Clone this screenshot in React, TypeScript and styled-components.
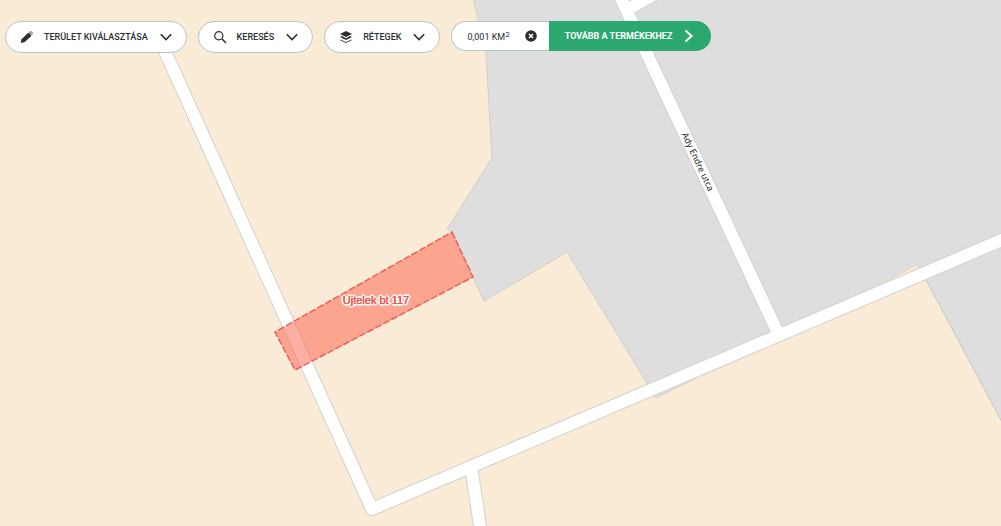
import React from 'react';
import styled, { createGlobalStyle } from 'styled-components';

const GlobalStyle = createGlobalStyle`
  *, *::before, *::after { box-sizing: border-box; }
  body { margin: 0; background: #faebd7; font-family: Roboto, "Liberation Sans", sans-serif; }
`;

const Page = styled.main`
  position: relative;
  min-height: 100vh;
  overflow: hidden;
`;

const MapCanvas = styled.svg`
  position: absolute;
  inset: 0;
  width: 100%;
  height: 100%;
  display: block;
`;

const StreetName = styled.text`
  font: 400 9px "Noto Sans", sans-serif;
  fill: #222;
  stroke: #fff;
  stroke-width: 2px;
  paint-order: stroke;
  text-anchor: middle;
`;

const ParcelName = styled.text`
  font: 400 11px "Liberation Sans", Arial, sans-serif;
  fill: #e85c56;
  text-anchor: middle;
  text-shadow:
    0 0 0 #e85c56, 0 0 0 #e85c56,
    1px 0 1px #fff, -1px 0 1px #fff, 0 1px 1px #fff, 0 -1px 1px #fff,
    2px 0 1px #fff, -2px 0 1px #fff, 0 2px 1px #fff, 0 -2px 1px #fff,
    1px 1px 1px #fff, -1px -1px 1px #fff, 1px -1px 1px #fff, -1px 1px 1px #fff;
`;

const Toolbar = styled.nav`
  position: relative;
  display: flex;
  align-items: flex-start;
  gap: 11px;
  padding: 21px 5px;
`;

const PillButton = styled.button`
  display: flex;
  align-items: center;
  height: 32px;
  padding: 0 14px;
  border: 1px solid #b4c8bf;
  border-radius: 16px;
  background: #fff;
  color: #2b2f31;
  font: 500 9px Roboto, sans-serif;
  white-space: nowrap;
  cursor: pointer;
`;

const PillLabel = styled.span`
  margin: 0 12px 0 10px;
`;

const AreaGroup = styled.div`
  display: flex;
  height: 30px;
`;

const AreaValue = styled.div`
  display: flex;
  align-items: center;
  gap: 15px;
  padding: 0 12px 0 15px;
  border: 1px solid #b4c8bf;
  border-right: 0;
  border-radius: 15px 0 0 15px;
  background: #fff;
  color: #2b2f31;
  font-size: 9px;
  white-space: nowrap;

  sup {
    font-size: 8px;
    line-height: 1;
    vertical-align: 3px;
  }
`;

const ClearButton = styled.button`
  display: flex;
  padding: 0;
  border: 0;
  background: none;
  cursor: pointer;
`;

const NextButton = styled.button`
  display: flex;
  align-items: center;
  gap: 12px;
  padding: 0 17px 0 16px;
  border: 0;
  border-radius: 0 15px 15px 0;
  background: #2ba86f;
  color: #fff;
  font: 700 9px Roboto, sans-serif;
  white-space: nowrap;
  cursor: pointer;
`;

const PencilIcon = () => (
  <svg width="14" height="14" viewBox="0 0 14 14" aria-hidden="true">
    <path d="M.8 13 L1.4 9.6 L7.6 3.2 Q8.4 2.6 9.2 3.2 L10.8 4.8 Q11.4 5.6 10.8 6.4 L4.4 12.2 Z" fill="#2b2f31" />
    <path d="M9.2 2.2 Q10.6 .9 12 2.1 Q13.2 3.4 11.9 4.8 Z" fill="#b9bcbc" stroke="#6b6f70" strokeWidth=".7" />
  </svg>
);

const SearchIcon = () => (
  <svg width="14" height="14" viewBox="0 0 14 14" fill="none" stroke="#2b2f31" aria-hidden="true">
    <circle cx="5.8" cy="5.8" r="4.1" strokeWidth="1.2" />
    <path d="M8.8 8.8 L13 13" strokeWidth="1.5" />
  </svg>
);

const LayersIcon = () => (
  <svg width="14" height="14" viewBox="0 0 14 14" aria-hidden="true">
    <path d="M7 1 L13 4 L7 7 L1 4 Z" fill="#2b2f31" />
    <path d="M1 7 L2.8 6.1 L7 8.2 L11.2 6.1 L13 7 L7 10 Z" fill="#2b2f31" />
    <path d="M1.4 9.9 L7 12.6 L12.6 9.9" fill="none" stroke="#2b2f31" strokeWidth=".9" />
  </svg>
);

const ChevronDown = () => (
  <svg width="12" height="12" viewBox="0 0 12 12" fill="none" stroke="#2b2f31" strokeWidth="1.6" aria-hidden="true">
    <path d="M.8 3.2 L6 8.6 L11.2 3.2" />
  </svg>
);

const ChevronRight = () => (
  <svg width="10" height="14" viewBox="0 0 10 14" fill="none" stroke="#fff" strokeWidth="2" aria-hidden="true">
    <path d="M1.5 1.5 L7.6 7 L1.5 12.5" />
  </svg>
);

const ClearIcon = () => (
  <svg width="12" height="12" viewBox="0 0 12 12" aria-hidden="true">
    <circle cx="6" cy="6" r="5.8" fill="#2b2f31" />
    <path d="M4 4 L8 8 M8 4 L4 8" stroke="#fff" strokeWidth="1.5" />
  </svg>
);

const roads = [
  'M159 38 L372 509 L1030 228',
  'M471 467 L481 532',
  'M617 -10 L777 331',
  'M628 9 L664 -11',
];

const menus = [
  { label: 'TERÜLET KIVÁLASZTÁSA', Icon: PencilIcon },
  { label: 'KERESÉS', Icon: SearchIcon },
  { label: 'RÉTEGEK', Icon: LayersIcon },
];

const ParcelMap = () => (
  <MapCanvas viewBox="0 0 1001 526" preserveAspectRatio="xMinYMin slice" role="img" aria-label="Ujtelek bt 117">
    <rect width="1001" height="526" fill="#faebd7" />
    <g fill="#dedede" stroke="#d2cfca" strokeWidth="1">
      <path d="M473 -2 L486 53 L492 158 L447 229 L452 232 L484 301 L567 252 L656 398 L700 376 L862 297 L918 265 L922 272 L1003 424 L1003 -2 Z" />
    </g>
    <path d="M700 373 L1003 244 L1003 236 L870 292 Z" fill="#dedede" />
    <path d="M866 293 L916 265 L920 268 L925 277 L850 310 Z" fill="#faebd7" stroke="#ead7c4" strokeWidth="1" />
    <path d="M697 378 L850 312 L925 279 L940 305 L780 440 Z" fill="#faebd7" />
    <path d="M925 278 L1003 424 L900 424 Z" fill="#faebd7" />
    <path d="M925 278 L1003 424" stroke="#cbc8c4" strokeWidth="1" />
    <g fill="none" strokeLinejoin="round">
      {roads.map((d) => <path key={d} d={d} stroke="#d3d1ce" strokeWidth="14" />)}
      {roads.map((d) => <path key={d} d={d} stroke="#fff" strokeWidth="12" />)}
    </g>
    <StreetName transform="translate(695 163) rotate(65)">Ady Endre utca</StreetName>
    <path d="M452 232 L473 277 L295 370 L275 332 Z" fill="#fc5f49" fillOpacity=".5" stroke="#e9605c" strokeWidth="1.5" strokeDasharray="7 2" />
    <ParcelName x="376" y="304">Ujtelek bt 117</ParcelName>
  </MapCanvas>
);

export default function App() {
  return (
    <Page>
      <GlobalStyle />
      <ParcelMap />
      <Toolbar>
        {menus.map(({ label, Icon }) => (
          <PillButton key={label} type="button" aria-haspopup="menu">
            <Icon />
            <PillLabel>{label}</PillLabel>
            <ChevronDown />
          </PillButton>
        ))}
        <AreaGroup>
          <AreaValue>
            <span>0,001 KM<sup>2</sup></span>
            <ClearButton type="button" aria-label="Törlés"><ClearIcon /></ClearButton>
          </AreaValue>
          <NextButton type="button">
            TOVÁBB A TERMÉKEKHEZ
            <ChevronRight />
          </NextButton>
        </AreaGroup>
      </Toolbar>
    </Page>
  );
}
